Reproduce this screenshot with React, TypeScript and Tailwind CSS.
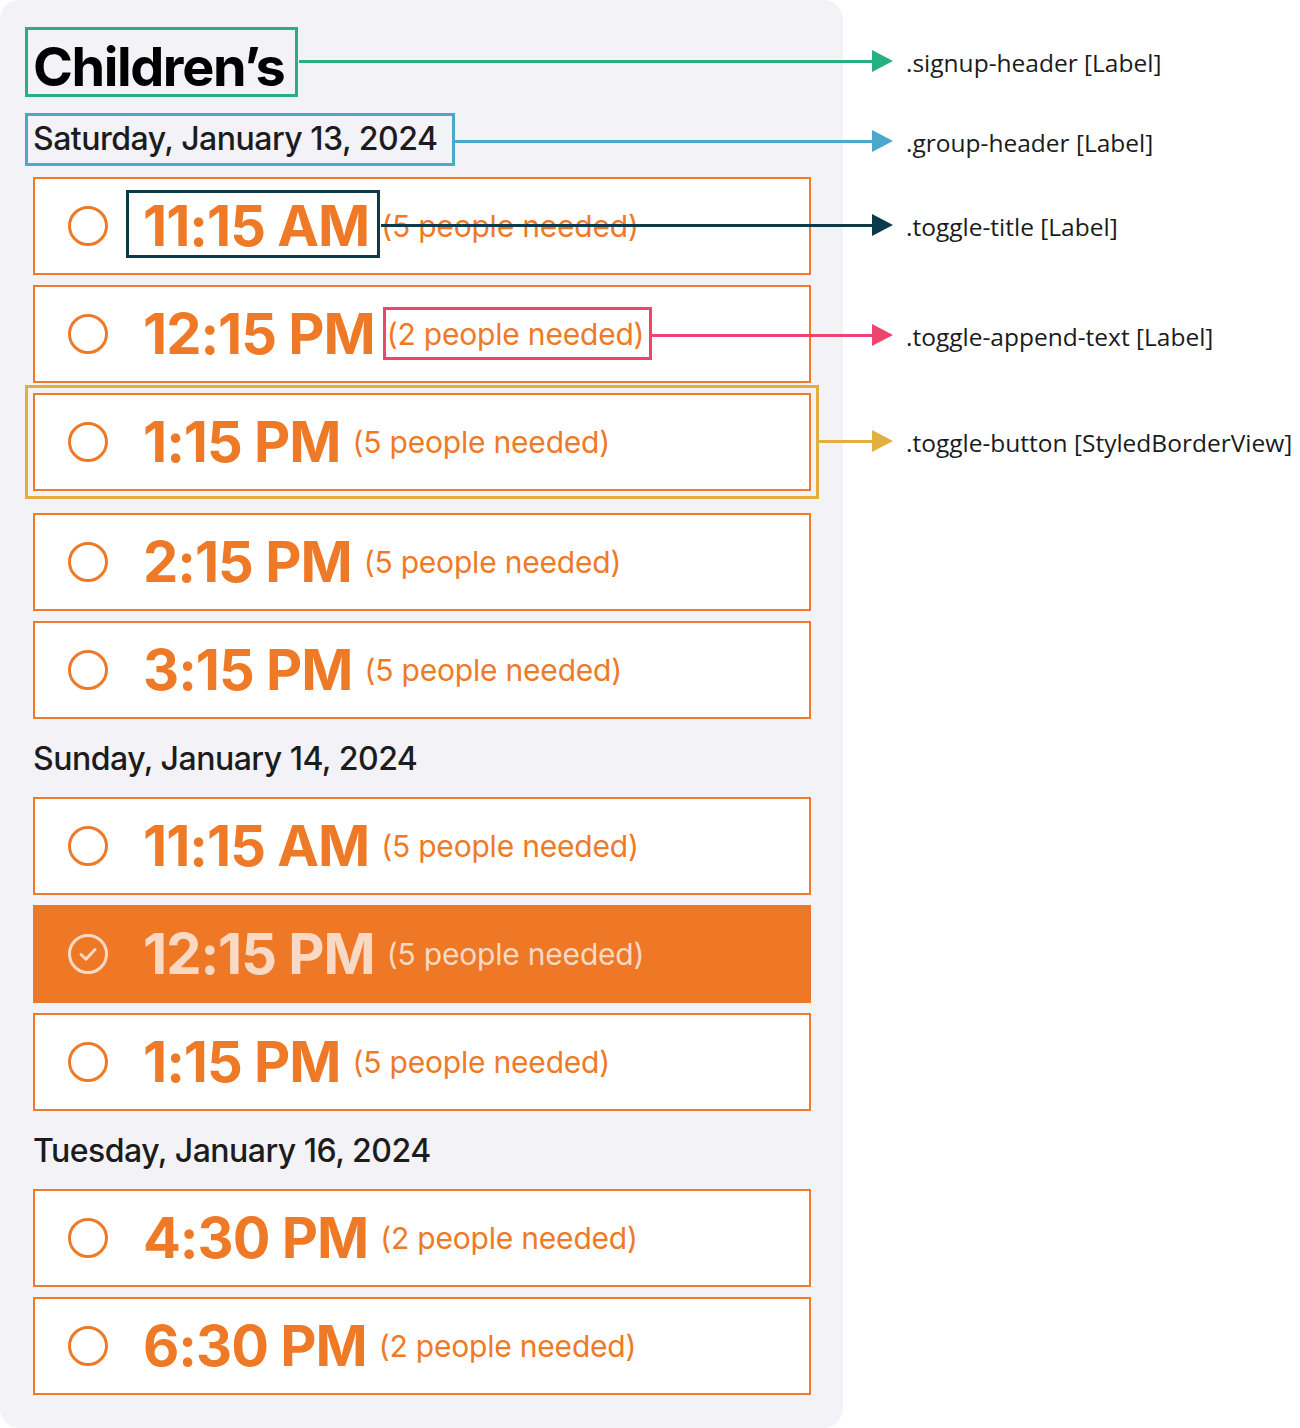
import React from "react";

type Slot = { time: string; need: string; selected?: boolean; titleBox?: boolean; appendBox?: boolean; wrap?: boolean };

const ORANGE = "#ee7a27";

function Circle({ selected }: { selected?: boolean }) {
  const c = selected ? "#f9d9c4" : ORANGE;
  return (
    <svg width="40" height="40" viewBox="0 0 40 40" className="shrink-0">
      <circle cx="20" cy="20" r="18.5" fill="none" stroke={c} strokeWidth="3" />
      {selected && (
        <path d="M13 20.5 L18 25.2 L27 15.5" fill="none" stroke={c} strokeWidth="3" strokeLinecap="round" strokeLinejoin="round" />
      )}
    </svg>
  );
}

function Row({ s }: { s: Slot }) {
  const sel = s.selected;
  const row = (
    <div
      className={
        "flex items-center h-[98px] border-2 pl-[33px] " +
        (sel ? "bg-[#ee7826] border-[#ee7826]" : "bg-white border-[#ee7a2a]")
      }
    >
      <Circle selected={sel} />
      <span
        className={
          "relative ml-[35px] text-[56px] leading-[56px] font-bold tracking-[-1px] " +
          (sel ? "text-[#f9d9c4]" : "text-[#ee7a27]")
        }
      >
        {s.time}
        {s.titleBox && (
          <span className="absolute left-[-17px] right-[-11px] top-[-8px] bottom-[-4px] border-[3px] border-[#0d3a4b]" />
        )}
      </span>
      <span
        className={
          "relative ml-[12px] text-[30px] leading-[36px] font-normal tracking-[-0.2px] " +
          (sel ? "text-[#f9d9c4]" : "text-[#ee7a27]")
        }
      >
        {s.need}
        {s.appendBox && (
          <span className="absolute left-[-4px] right-[-8px] top-[-9px] bottom-[-8px] border-[3px] border-[#ee4470]" />
        )}
      </span>
    </div>
  );
  if (s.wrap) {
    return (
      <div className="mx-[-8px] mt-[-8px] mb-[4px] border-[3px] border-[#e1b03f] p-[5px]">{row}</div>
    );
  }
  return row;
}

function GroupHeader({ text, boxed, first }: { text: string; boxed?: boolean; first?: boolean }) {
  return (
    <div className={"h-[40px] flex items-center mb-[18px] " + (first ? "mt-[24px]" : "mt-[20px]")}>
      <span className="relative text-[32px] leading-[40px] font-medium text-[#1c1c1e] tracking-[-0.5px]">
        {text}
        {boxed && (
          <span className="absolute left-[-8px] right-[-18px] top-[-6px] bottom-[-7px] border-[3px] border-[#4aa9cb]" />
        )}
      </span>
    </div>
  );
}

function Arrow({ y, x, color, label }: { y: number; x: number; color: string; label: string }) {
  return (
    <>
      <div
        className="absolute h-[3px]"
        style={{ top: y - 1.5, left: x, width: 875 - x, background: color }}
      />
      <svg className="absolute" style={{ top: y - 11, left: 872 }} width="21" height="22" viewBox="0 0 21 22">
        <polygon points="0,0 21,11 0,22" fill={color} />
      </svg>
      <div
        className="absolute text-[24.5px] leading-[30px] text-[#1b1b1b] whitespace-nowrap"
        style={{ top: y - 13, left: 906, fontFamily: "'Open Sans', 'Noto Sans', sans-serif" }}
      >
        {label}
      </div>
    </>
  );
}

export default function App() {
  const sat: Slot[] = [
    { time: "11:15 AM", need: "(5 people needed)", titleBox: true },
    { time: "12:15 PM", need: "(2 people needed)", appendBox: true },
    { time: "1:15 PM", need: "(5 people needed)", wrap: true },
    { time: "2:15 PM", need: "(5 people needed)" },
    { time: "3:15 PM", need: "(5 people needed)" },
  ];
  const sun: Slot[] = [
    { time: "11:15 AM", need: "(5 people needed)" },
    { time: "12:15 PM", need: "(5 people needed)", selected: true },
    { time: "1:15 PM", need: "(5 people needed)" },
  ];
  const tue: Slot[] = [
    { time: "4:30 PM", need: "(2 people needed)" },
    { time: "6:30 PM", need: "(2 people needed)" },
  ];
  return (
    <div className="relative w-[1300px] h-[1428px] bg-white flex" style={{ fontFamily: "Inter, 'Noto Sans', sans-serif" }}>
      <div className="w-[843px] h-[1428px] bg-[#f2f2f7] rounded-[20px] pl-[33px] pr-[32px] pt-[39px] flex flex-col">
        <div className="h-[56px] flex items-center">
          <span className="relative text-[54px] leading-[56px] font-bold text-black tracking-[-1.4px]">
            Children’s
            <span className="absolute left-[-8px] right-[-14px] top-[-12px] bottom-[-2px] border-[3px] border-[#27b07f]" />
          </span>
        </div>
        <GroupHeader text="Saturday, January 13, 2024" boxed first />
        <div className="flex flex-col gap-[10px]">
          {sat.map((s, i) => (
            <Row key={i} s={s} />
          ))}
        </div>
        <GroupHeader text="Sunday, January 14, 2024" />
        <div className="flex flex-col gap-[10px]">
          {sun.map((s, i) => (
            <Row key={i} s={s} />
          ))}
        </div>
        <GroupHeader text="Tuesday, January 16, 2024" />
        <div className="flex flex-col gap-[10px]">
          {tue.map((s, i) => (
            <Row key={i} s={s} />
          ))}
        </div>
      </div>
      <Arrow y={61} x={299} color="#27b07f" label=".signup-header [Label]" />
      <Arrow y={141} x={455} color="#4aa9cb" label=".group-header [Label]" />
      <Arrow y={225} x={381} color="#0d3a4b" label=".toggle-title [Label]" />
      <Arrow y={335} x={651} color="#ee4470" label=".toggle-append-text [Label]" />
      <Arrow y={441} x={819} color="#e1b03f" label=".toggle-button [StyledBorderView]" />
    </div>
  );
}
